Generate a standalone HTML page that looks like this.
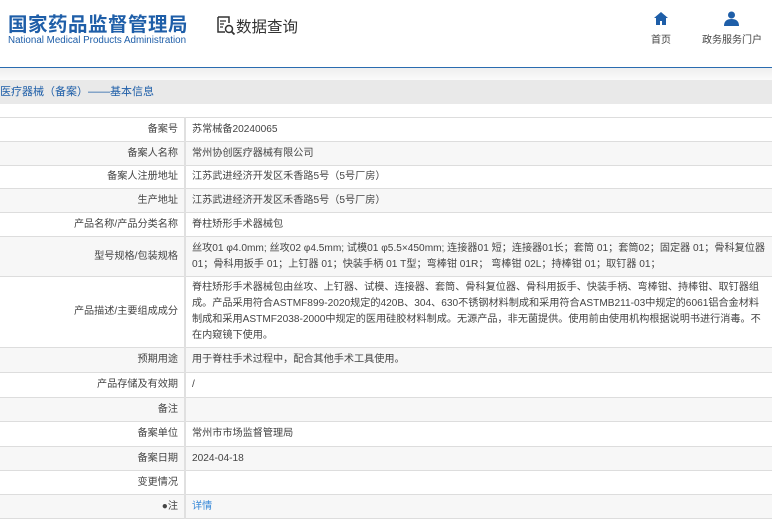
<!DOCTYPE html>
<html><head><meta charset="utf-8"><style>
body{margin:0;width:772px;height:518px;overflow:hidden;background:#fff;font-family:"Liberation Sans","Noto Sans CJK SC",sans-serif;}
.hdr{position:relative;height:67px;border-bottom:1px solid #2a6cb0;}
.t1{position:absolute;left:8px;top:8px;font-size:19.5px;font-weight:bold;color:#1e5ea8;letter-spacing:0.5px;}
.t2{position:absolute;left:8px;top:35px;font-size:9.8px;color:#1e5ea8;}
.sq{position:absolute;left:216px;top:15px;font-size:15.5px;color:#333;}
.nav{position:absolute;top:31px;font-size:10px;color:#444;}
.grad{height:12px;background:linear-gradient(#eee,#fafafa);}
.bar{height:24px;background:#e9e9e9;font-size:11px;color:#1e5ea8;line-height:25px;}
table{position:absolute;top:117px;left:0;width:772px;border-collapse:collapse;font-size:10.15px;color:#444;}
td{border-top:1px solid #ddd;border-bottom:1px solid #ddd;padding:0 6px;line-height:16px;}
td.l{width:172px;text-align:right;border-right:2px solid #e0e0e0;}
tr:nth-child(even){background:#f7f7f7;}
</style></head><body>
<div class="hdr">
<div class="t1">国家药品监督管理局</div>
<div class="t2">National Medical Products Administration</div>
<div class="sq"><svg width="20" height="20" viewBox="0 0 20 20" style="vertical-align:-3px"><path d="M2 2h11v6M2 2v15h7" fill="none" stroke="#333" stroke-width="1.5"/><path d="M4 6h6M4 9h4M4 12h3" stroke="#333" stroke-width="1.2"/><circle cx="13" cy="14" r="3.5" fill="none" stroke="#333" stroke-width="1.5"/><path d="M15.5 16.5l3 3" stroke="#333" stroke-width="1.8"/></svg>数据查询</div>
<svg style="position:absolute;left:654px;top:12px" width="14" height="13" viewBox="0 0 14 13"><path d="M7 0L0 6h2v7h4V9h2v4h4V6h2z" fill="#1e5ea8"/></svg>
<div class="nav" style="left:651px">首页</div>
<svg style="position:absolute;left:724px;top:11px" width="15" height="15" viewBox="0 0 15 15"><circle cx="7.5" cy="4" r="3.5" fill="#1e5ea8"/><path d="M0 15c0-5 3-7 7.5-7s7.5 2 7.5 7z" fill="#1e5ea8"/></svg>
<div class="nav" style="left:702px">政务服务门户</div>
</div>
<div class="grad"></div>
<div class="bar">医疗器械（备案）——基本信息</div>
<table>
<tr style="height:24px"><td class="l">备案号</td><td>苏常械备20240065</td></tr>
<tr style="height:24px"><td class="l">备案人名称</td><td>常州协创医疗器械有限公司</td></tr>
<tr style="height:23px"><td class="l">备案人注册地址</td><td>江苏武进经济开发区禾香路5号（5号厂房）</td></tr>
<tr style="height:24px"><td class="l">生产地址</td><td>江苏武进经济开发区禾香路5号（5号厂房）</td></tr>
<tr style="height:24px"><td class="l">产品名称/产品分类名称</td><td>脊柱矫形手术器械包</td></tr>
<tr style="height:40px"><td class="l">型号规格/包装规格</td><td>丝攻01 φ4.0mm; 丝攻02 φ4.5mm; 试模01 φ5.5×450mm; 连接器01 短；连接器01长；套筒 01；套筒02；固定器 01；骨科复位器 01；骨科用扳手 01；上钉器 01；快装手柄 01 T型；弯棒钳 01R； 弯棒钳 02L；持棒钳 01；取钉器 01；</td></tr>
<tr style="height:71px"><td class="l">产品描述/主要组成成分</td><td>脊柱矫形手术器械包由丝攻、上钉器、试模、连接器、套筒、骨科复位器、骨科用扳手、快装手柄、弯棒钳、持棒钳、取钉器组成。产品采用符合ASTMF899-2020规定的420B、304、630不锈钢材料制成和采用符合ASTMB211-03中规定的6061铝合金材料制成和采用ASTMF2038-2000中规定的医用硅胶材料制成。无源产品，非无菌提供。使用前由使用机构根据说明书进行消毒。不在内窥镜下使用。</td></tr>
<tr style="height:25px"><td class="l">预期用途</td><td>用于脊柱手术过程中，配合其他手术工具使用。</td></tr>
<tr style="height:25px"><td class="l">产品存储及有效期</td><td>/</td></tr>
<tr style="height:24px"><td class="l">备注</td><td></td></tr>
<tr style="height:25px"><td class="l">备案单位</td><td>常州市市场监督管理局</td></tr>
<tr style="height:24px"><td class="l">备案日期</td><td>2024-04-18</td></tr>
<tr style="height:24px"><td class="l">变更情况</td><td></td></tr>
<tr style="height:24px"><td class="l">●注</td><td style="color:#3a8ad8">详情</td></tr>
</table>
</body></html>
